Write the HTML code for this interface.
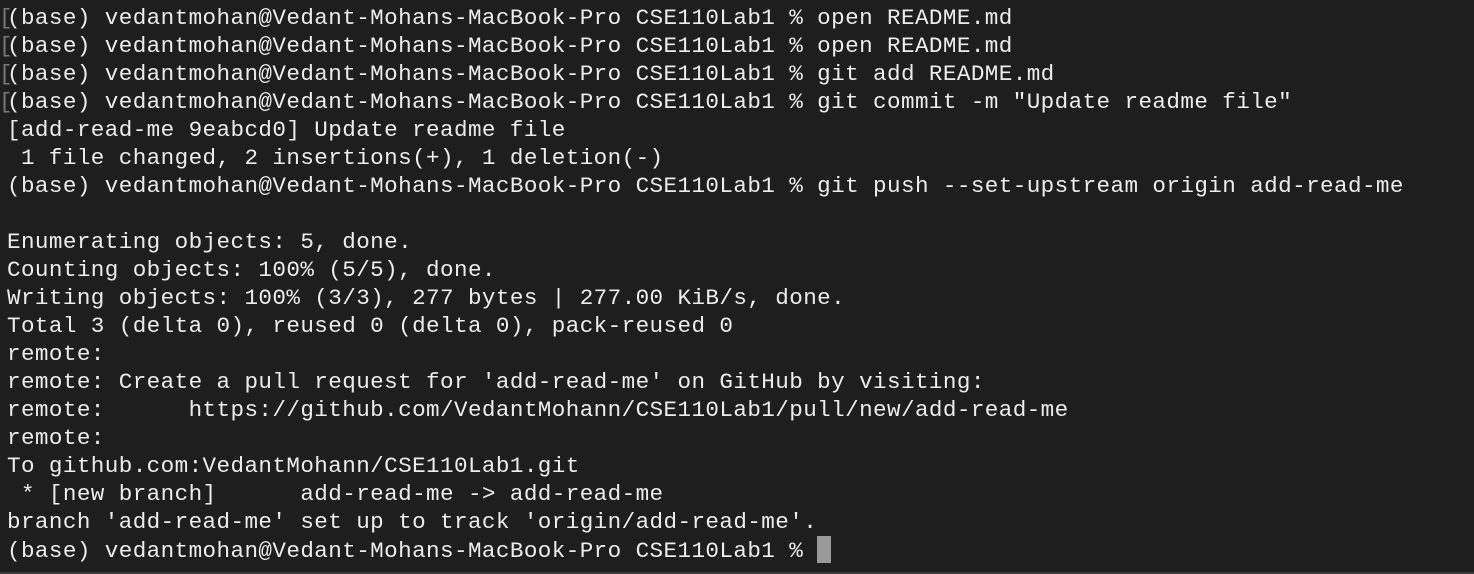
<!DOCTYPE html>
<html><head><style>
html,body{margin:0;padding:0;background:#1e1e1e;width:1474px;height:574px;overflow:hidden}
pre{position:absolute;left:7px;top:4px;margin:0;font-family:"Liberation Mono",monospace;font-size:22.6px;line-height:28px;color:#ececec;letter-spacing:0.41px}
.b{position:absolute;left:-8px;color:#777}
.cur{display:inline-block;width:14px;height:27px;background:#9a9a9a;vertical-align:-6px}
.bot{position:absolute;left:0;right:0;bottom:0;height:2px;background:#3a3a3a}
</style></head><body>
<pre><span class="b">[</span>(base) vedantmohan@Vedant-Mohans-MacBook-Pro CSE110Lab1 % open README.md
<span class="b">[</span>(base) vedantmohan@Vedant-Mohans-MacBook-Pro CSE110Lab1 % open README.md
<span class="b">[</span>(base) vedantmohan@Vedant-Mohans-MacBook-Pro CSE110Lab1 % git add README.md
<span class="b">[</span>(base) vedantmohan@Vedant-Mohans-MacBook-Pro CSE110Lab1 % git commit -m "Update readme file"
[add-read-me 9eabcd0] Update readme file
 1 file changed, 2 insertions(+), 1 deletion(-)
(base) vedantmohan@Vedant-Mohans-MacBook-Pro CSE110Lab1 % git push --set-upstream origin add-read-me

Enumerating objects: 5, done.
Counting objects: 100% (5/5), done.
Writing objects: 100% (3/3), 277 bytes | 277.00 KiB/s, done.
Total 3 (delta 0), reused 0 (delta 0), pack-reused 0
remote:
remote: Create a pull request for 'add-read-me' on GitHub by visiting:
remote:      https://github.com/VedantMohann/CSE110Lab1/pull/new/add-read-me
remote:
To github.com:VedantMohann/CSE110Lab1.git
 * [new branch]      add-read-me -> add-read-me
branch 'add-read-me' set up to track 'origin/add-read-me'.
(base) vedantmohan@Vedant-Mohans-MacBook-Pro CSE110Lab1 % <span class="cur"></span></pre>
<div class="bot"></div>
</body></html>
